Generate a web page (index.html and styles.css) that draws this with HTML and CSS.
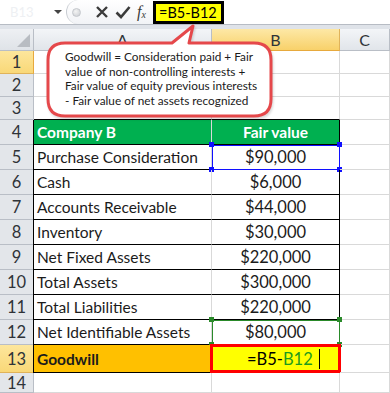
FILE: index.html
```html
<!DOCTYPE html>
<html lang="en">
<head>
    <meta charset="UTF-8">
    <meta name="viewport" content="width=device-width, initial-scale=1.0">
    <title>Goodwill</title>
    <link rel="stylesheet" href="styles.css">
</head>
<body>

    <div id="app">
        <div class="fbar">
            <div class="namebox">
                <span class="nb-text">B13</span>
                <span class="nb-arrow"></span>
            </div>
            <div class="tools">
                <span class="grip"></span>
                <svg class="ico" width="14" height="14" viewBox="0 0 14 14"><path d="M2 2 L12 12 M12 2 L2 12" stroke="#3b3b3b" stroke-width="2.4" fill="none"/></svg>
                <svg class="ico" width="16" height="14" viewBox="0 0 16 14"><path d="M1.5 7.5 L6 12 L14.5 2" stroke="#3b3b3b" stroke-width="2.6" fill="none"/></svg>
                <span class="fx">f<sub>x</sub></span>
            </div>
            <div class="formula">
                <span class="formula-box">=B5-B12</span>
            </div>
        </div>

        <div class="sheet">
            <!-- header -->
            <div class="c corner"><span class="tri"></span></div>
            <div class="c hd">A</div>
            <div class="c hd sel">B</div>
            <div class="c hd">C</div>

            <div class="c rh sel">1</div><div class="c"></div><div class="c"></div><div class="c"></div>
            <div class="c rh">2</div><div class="c"></div><div class="c"></div><div class="c"></div>
            <div class="c rh">3</div><div class="c bk"></div><div class="c bk"></div><div class="c"></div>

            <div class="c rh">4</div>
            <div class="c t green bl">Company B</div>
            <div class="c t green num br">Fair value</div>
            <div class="c"></div>

            <div class="c rh">5</div>
            <div class="c t bl">Purchase Consideration</div>
            <div class="c t num br blue-sel">$90,000<i class="hd1"></i><i class="hd2"></i><i class="hd3"></i><i class="hd4"></i></div>
            <div class="c"></div>

            <div class="c rh">6</div><div class="c t bl">Cash</div><div class="c t num br">$6,000</div><div class="c"></div>
            <div class="c rh">7</div><div class="c t bl">Accounts Receivable</div><div class="c t num br">$44,000</div><div class="c"></div>
            <div class="c rh">8</div><div class="c t bl">Inventory</div><div class="c t num br">$30,000</div><div class="c"></div>
            <div class="c rh">9</div><div class="c t bl">Net Fixed Assets</div><div class="c t num br">$220,000</div><div class="c"></div>
            <div class="c rh">10</div><div class="c t bl">Total Assets</div><div class="c t num br">$300,000</div><div class="c"></div>
            <div class="c rh">11</div><div class="c t bl">Total Liabilities</div><div class="c t num br">$220,000</div><div class="c"></div>

            <div class="c rh">12</div>
            <div class="c t bl">Net Identifiable Assets</div>
            <div class="c t num br green-sel">$80,000<i class="hd1"></i><i class="hd2"></i><i class="hd3"></i><i class="hd4"></i></div>
            <div class="c"></div>

            <div class="c rh sel">13</div>
            <div class="c t bl orange">Goodwill</div>
            <div class="c t br edit"><span class="edit-box">=B5-<span class="ref">B12</span><span class="caret"></span></span></div>
            <div class="c"></div>

            <div class="c rh last">14</div><div class="c"></div><div class="c"></div><div class="c"></div>
        </div>

        <svg class="callout" width="390" height="393" viewBox="0 0 390 393">
            <path d="M65 43 H172 L193 26 L189 43 H254 Q271 43 271 60 V99 Q271 116 254 116 H65 Q48 116 48 99 V60 Q48 43 65 43 Z"
                  fill="#ffffff" stroke="#e5484b" stroke-width="3" stroke-linejoin="round"/>
        </svg>
        <div class="callout-text">
            Goodwill = Consideration paid + Fair<br>
            value of non-controlling interests +<br>
            Fair value of equity previous interests<br>
            - Fair value of net assets recognized
        </div>
    </div>

</body>
</html>
```

FILE: styles.css
```css
*, *::after, *::before{
    margin: 0;
    padding: 0;
    box-sizing: border-box;
}
:root {
    --grid: #d9d9d9;
    --hd-bg: #e3e6ea;
    --hd-line: #b9bec6;
    --green: #00b050;
    --orange: #ffc000;
}

body{
    background-color: #ffffff;
    font-family: "Lato", "Open Sans", sans-serif;
    color: #1b1b1b;
}
#app{
    position: relative;
    width: 390px;
    height: 393px;
    overflow: hidden;
    background-color: #dfe3e9;
}

/* formula bar */
.fbar{
    display: flex;
    align-items: center;
    height: 25px;
    background-color: #ffffff;
    border-bottom: 1px solid #b7bcc4;
    margin-bottom: 4px;
}
.namebox{
    width: 66px;
    height: 24px;
    display: flex;
    align-items: center;
    justify-content: space-between;
    padding: 0 4px 0 10px;
}
.nb-text{
    color: #eef0f3;
    font-size: 13px;
}
.nb-arrow{
    width: 0;
    height: 0;
    border-left: 4px solid transparent;
    border-right: 4px solid transparent;
    border-top: 4px solid #444;
}
.tools{
    display: flex;
    align-items: center;
    gap: 6px;
    height: 24px;
    width: 87px;
    padding-left: 5px;
    border-left: 1px solid #c8ccd2;
    border-radius: 12px 0 0 12px;
    background: linear-gradient(#ffffff, #f1f3f6);
}
.grip{
    width: 9px;
    height: 9px;
    border-radius: 50%;
    background: radial-gradient(circle at 40% 35%, #f4f4f4, #c9ccd1);
    border: 1px solid #c4c7cc;
    margin-right: 8px;
}
.ico{
    display: block;
}
.fx{
    font-family: "Liberation Serif", serif;
    font-style: italic;
    font-size: 16px;
    color: #3b3b3b;
    line-height: 1;
}
.fx sub{
    font-size: 10px;
    vertical-align: -1px;
}
.formula{
    flex: 1;
    height: 24px;
    display: flex;
    align-items: center;
}
.formula-box{
    display: block;
    height: 23px;
    width: 71px;
    background-color: #ffff00;
    border: 3px solid #000000;
    font-family: "Lato", sans-serif;
    font-size: 14.5px;
    line-height: 17px;
    padding-left: 3px;
    color: #000;
    white-space: nowrap;
}

/* sheet */
.sheet{
    display: grid;
    grid-template-columns: 34px 178px 128px 1fr;
    grid-template-rows: 22px repeat(3, 23px) repeat(9, 25px) 28px 20px;
    background-color: #ffffff;
}
.c{
    position: relative;
    border-right: 1px solid var(--grid);
    border-bottom: 1px solid var(--grid);
    font-size: 16.5px;
    white-space: nowrap;
    display: flex;
    align-items: center;
}
.corner{
    background: linear-gradient(#eef0f3, #dfe3e8);
    border-color: var(--hd-line);
}
.tri{
    position: absolute;
    right: 3px;
    bottom: 3px;
    width: 0;
    height: 0;
    border-left: 13px solid transparent;
    border-bottom: 13px solid #b8bcc2;
}
.hd{
    justify-content: center;
    background: linear-gradient(#f3f5f8, #e1e5ea);
    border-color: var(--hd-line);
    color: #2f3338;
    font-size: 16px;
}
.rh{
    justify-content: center;
    background-color: var(--hd-bg);
    border-color: var(--hd-line);
    color: #2f3338;
    font-size: 16.5px;
}
.rh.last{
    align-items: flex-start;
}
.hd.sel{
    background: linear-gradient(#fde8a6, #f8d16a);
    border-bottom: 1px solid #e7a93d;
    border-right-color: #e0b35a;
}
.rh.sel{
    background: linear-gradient(#fde69c, #f9d878);
    border-right: 1px solid #e7a93d;
    border-bottom-color: #e0b35a;
}

.t{
    padding-left: 3px;
    border-bottom-color: #000;
}
.bk{
    border-bottom-color: #000;
}
.bl{
    font-size: 15.5px;
    border-left: 1px solid #000;
    margin-left: -1px;
}
.br{
    border-right-color: #000;
}
.num{
    justify-content: center;
    padding-left: 0;
}
.green{
    background-color: var(--green);
    color: #ffffff;
    font-weight: 700;
}
.green.num{
    font-size: 15.5px;
}
.orange{
    background-color: var(--orange);
    font-weight: 700;
}

/* selections */
.blue-sel, .green-sel{
    outline: 1px solid #1010ff;
    outline-offset: -1px;
}
.green-sel{
    outline-color: #2a8a2a;
}
.blue-sel i, .green-sel i{
    position: absolute;
    width: 5px;
    height: 5px;
    background-color: #1010ff;
}
.green-sel i{
    background-color: #2a8a2a;
}
.hd1{ left: -3px; top: -3px; }
.hd2{ right: -3px; top: -3px; }
.hd3{ left: -3px; bottom: -3px; }
.hd4{ right: -3px; bottom: -3px; }

.edit{
    padding: 0;
    background-color: #ffff00;
    border: 3px solid #ff0000;
    margin: -1px -1px 0 -2px;
    justify-content: flex-start;
}
.edit-box{
    padding-left: 34px;
    color: #000;
    display: flex;
    align-items: center;
}
.ref{
    color: #1e9b1e;
}
.caret{
    display: inline-block;
    width: 1px;
    height: 20px;
    background-color: #000;
    margin-left: 6px;
}

/* callout */
.callout{
    position: absolute;
    left: 0;
    top: 0;
    pointer-events: none;
    filter: drop-shadow(1px 2px 1px rgba(0, 0, 0, 0.15));
}
.callout-text{
    position: absolute;
    left: 65px;
    top: 50px;
    font-size: 11.8px;
    line-height: 14.5px;
    color: #1b1b1b;
    white-space: nowrap;
}
```
